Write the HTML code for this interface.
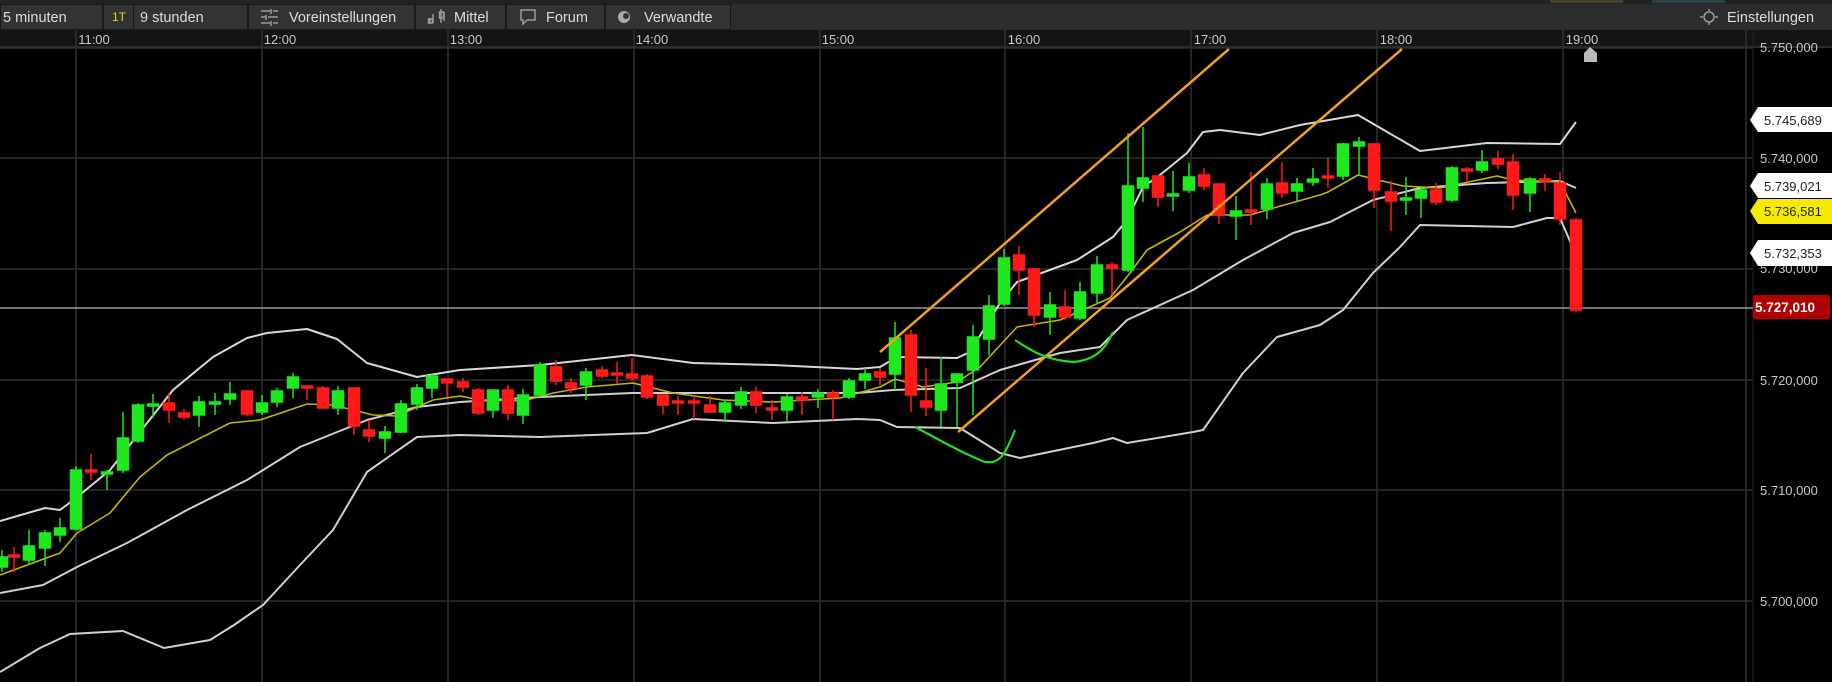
<!DOCTYPE html>
<html><head><meta charset="utf-8"><style>
html,body{margin:0;padding:0;background:#000;width:1832px;height:682px;overflow:hidden;font-family:"Liberation Sans",sans-serif}
svg{display:block}
</style></head><body>
<svg width="1832" height="682" viewBox="0 0 1832 682" xmlns="http://www.w3.org/2000/svg" font-family="Liberation Sans, sans-serif">
<rect width="1832" height="682" fill="#000"/>
<!-- top strip -->
<rect x="0" y="0" width="1832" height="4" fill="#222"/>
<rect x="1550" y="0" width="73" height="3" fill="#4a3f2a"/>
<rect x="1652" y="0" width="73" height="3" fill="#2a4148"/>
<!-- toolbar -->
<rect x="0" y="4" width="1832" height="26" fill="#2a2c2e"/>
<g fill="#313335" stroke="#1a1a1a" stroke-width="1">
<rect x="0.5" y="4.5" width="102" height="25"/>
<rect x="103.5" y="4.5" width="144" height="25"/>
<rect x="248.5" y="4.5" width="166" height="25"/>
<rect x="415.5" y="4.5" width="90" height="25"/>
<rect x="506.5" y="4.5" width="98" height="25"/>
<rect x="605.5" y="4.5" width="125" height="25"/>
</g>
<line x1="133.5" y1="5" x2="133.5" y2="29" stroke="#1a1a1a"/>
<g font-size="14.5" fill="#dcdcdc">
<text x="3" y="22">5 minuten</text>
<text x="112" y="21" fill="#e8d800" font-size="12">1T</text>
<text x="140" y="22">9 stunden</text>
<text x="289" y="22">Voreinstellungen</text>
<text x="454" y="22">Mittel</text>
<text x="546" y="22">Forum</text>
<text x="644" y="22">Verwandte</text>
<text x="1727" y="22">Einstellungen</text>
</g>
<!-- icons -->
<g stroke="#9a9a9a" stroke-width="1.5" fill="none">
<path d="M261 11h9M273 11h5M261 17h4M268 17h10M261 23h9M273 23h5M271 9v5M266 15v5M271 21v5"/>
<path d="M430 18v6M433 14v9M441 9v14M444 12v9"/>
<rect x="428.5" y="19" width="4" height="4"/><rect x="439.5" y="12" width="4" height="6"/>
<path d="M521 10h14v10h-8l-4 4v-4h-2z"/>
<path d="M1700 17h3M1715 17h3M1709 9v2M1709 23v2"/>
<circle cx="1709" cy="17" r="5"/>
</g>
<circle cx="624" cy="17" r="6" fill="#aaa"/><circle cx="626" cy="16" r="3" fill="#313335"/>
<!-- time axis row -->
<rect x="0" y="30" width="1832" height="17" fill="#141414"/>
<line x1="0" y1="47" x2="1832" y2="47" stroke="#2a2a2a" stroke-width="2"/>
<g font-size="13" fill="#c8c8c8" text-anchor="middle">
<text x="94" y="44">11:00</text><text x="280" y="44">12:00</text><text x="466" y="44">13:00</text>
<text x="652" y="44">14:00</text><text x="838" y="44">15:00</text><text x="1024" y="44">16:00</text>
<text x="1210" y="44">17:00</text><text x="1396" y="44">18:00</text><text x="1582" y="44">19:00</text>
</g>
<!-- grid -->
<g stroke="#303030" stroke-width="1.5">
<path d="M76 30V682M262 30V682M448 30V682M634 30V682M820 30V682M1005 30V682M1191 30V682M1377 30V682M1563 30V682M1746 30V682"/>
<path d="M0 48H1753M0 158H1753M0 269H1753M0 380H1753M0 490H1753M0 601H1753"/>
</g>
<line x1="1753" y1="30" x2="1753" y2="682" stroke="#222" stroke-width="1"/>
<line x1="0" y1="308" x2="1753" y2="308" stroke="#9a9a9a" stroke-width="1.5"/>
<!-- marker -->
<path d="M1584 62v-9l6-6 7 6v9z" fill="#bbb"/>
<!-- bands -->
<g fill="none" stroke-width="2" stroke-linejoin="round">
<polyline stroke="#d8d8d8" points="0,521 45,508 60,510 76,498 110,470 140,432 173,390 213,357 247,338 267,333 307,329 337,339 367,363 417,377 460,370 540,365 632,355 693,363 773,365 857,369 880,367 897,357 957,358 970,352 1000,303 1017,282 1077,260 1113,237 1127,220 1143,187 1160,175 1187,153 1203,132 1220,130 1260,135 1300,125 1358,115 1420,151 1487,143 1560,144 1576,122"/>
<polyline stroke="#d0d0d0" points="0,593 43,585 77,567 127,543 187,510 247,480 300,447 367,420 417,407 460,402 540,397 632,393 740,393 857,393 893,390 960,388 1000,370 1060,353 1100,347 1127,320 1193,290 1243,260 1293,233 1330,222 1373,200 1420,188 1487,183 1560,181 1576,188"/>
<polyline stroke="#d0d0d0" points="0,672 40,648 70,634 123,631 164,648 210,640 234,625 263,605 300,565 333,530 367,472 417,437 460,435 540,437 647,433 693,419 773,423 857,419 880,420 897,427 960,428 1000,453 1020,458 1093,443 1113,438 1127,443 1193,432 1203,430 1243,373 1277,337 1320,325 1343,310 1373,273 1400,247 1420,225 1513,227 1547,218 1560,218 1576,255"/>
<polyline stroke="#c8b400" stroke-width="1.6" points="0,575 60,553 77,533 110,513 140,477 167,455 230,423 260,420 307,404 333,405 373,415 397,416 433,400 460,396 480,400 523,401 553,393 587,387 633,383 673,393 723,400 773,402 840,398 880,387 895,379 923,387 957,382 980,367 1017,327 1060,320 1110,298 1130,273 1147,250 1180,232 1207,215 1250,215 1277,207 1320,195 1328,192 1358,175 1403,186 1440,188 1497,176 1513,180 1560,182 1576,213"/>
</g>
<!-- candles -->
<g stroke-width="1.5">
<g stroke="#ff1a1a" fill="#ff1a1a">
<path d="M14 547V572M91 454V480M169 393V423M184 409V420M247 391V416M307 386V400M323 386V409M354 387V435M369 420V442M447 379V397M463 378V392M478 388V415M508 385V420M556 360V385M571 378V393M602 366V378M617 362V384M632 358V381M647 374V399M663 395V414M678 396V415M694 396V419M710 396V413M756 387V413M772 400V420M802 392V415M833 390V420M880 368V385M911 330V412M926 368V416M1019 246V295M1034 269V327M1065 290V320M1112 262V295M1158 176V207M1204 168V190M1219 184V224M1251 172V225M1282 162V198M1328 158V188M1374 143V208M1391 181V231M1436 183V205M1467 167V181M1498 151V169M1513 154V210M1545 174V191M1560 172V225M1576 218V312"/>
<rect x="8.5" y="555" width="11" height="2"/><rect x="85.5" y="470" width="11" height="2"/><rect x="163.5" y="403" width="11" height="7"/><rect x="178.5" y="413" width="11" height="4"/><rect x="241.5" y="391" width="11" height="23"/><rect x="301.5" y="386" width="11" height="2"/><rect x="317.5" y="388" width="11" height="20"/><rect x="348.5" y="388" width="11" height="38"/><rect x="363.5" y="430" width="11" height="6"/><rect x="441.5" y="379" width="11" height="4"/><rect x="457.5" y="382" width="11" height="5"/><rect x="472.5" y="390" width="11" height="23"/><rect x="502.5" y="390" width="11" height="23"/><rect x="550.5" y="367" width="11" height="14"/><rect x="565.5" y="383" width="11" height="5"/><rect x="596.5" y="370" width="11" height="6"/><rect x="611.5" y="373" width="11" height="2"/><rect x="626.5" y="374" width="11" height="4"/><rect x="641.5" y="376" width="11" height="21"/><rect x="657.5" y="395" width="11" height="10"/><rect x="672.5" y="401" width="11" height="2"/><rect x="688.5" y="401" width="11" height="2"/><rect x="704.5" y="405" width="11" height="7"/><rect x="750.5" y="392" width="11" height="13"/><rect x="766.5" y="408" width="11" height="2"/><rect x="796.5" y="397" width="11" height="3"/><rect x="827.5" y="393" width="11" height="4"/><rect x="874.5" y="372" width="11" height="5"/><rect x="905.5" y="335" width="11" height="60"/><rect x="920.5" y="401" width="11" height="6"/><rect x="1013.5" y="255" width="11" height="15"/><rect x="1028.5" y="269" width="11" height="46"/><rect x="1059.5" y="307" width="11" height="10"/><rect x="1106.5" y="265" width="11" height="3"/><rect x="1152.5" y="176" width="11" height="21"/><rect x="1198.5" y="175" width="11" height="11"/><rect x="1213.5" y="184" width="11" height="31"/><rect x="1245.5" y="210" width="11" height="2"/><rect x="1276.5" y="183" width="11" height="10"/><rect x="1322.5" y="176" width="11" height="2"/><rect x="1368.5" y="144" width="11" height="46"/><rect x="1385.5" y="192" width="11" height="9"/><rect x="1430.5" y="190" width="11" height="12"/><rect x="1461.5" y="169" width="11" height="2"/><rect x="1492.5" y="159" width="11" height="5"/><rect x="1507.5" y="162" width="11" height="33"/><rect x="1539.5" y="179" width="11" height="2"/><rect x="1554.5" y="183" width="11" height="36"/><rect x="1570.5" y="220" width="11" height="90"/>
</g>
<g stroke="#1ee81e" fill="#1ee81e">
<path d="M2 550V572M29 530V565M45 530V566M60 518V542M76 466V530M107 470V490M123 412V473M138 403V443M153 394V418M199 396V427M215 393V415M230 382V405M262 395V415M277 388V407M293 373V398M338 386V415M385 426V453M401 400V433M417 384V410M432 374V398M493 390V418M523 389V424M540 362V397M586 368V400M725 400V422M741 387V409M787 394V422M818 389V408M849 378V399M865 368V389M895 322V390M941 357V427M957 374V427M973 325V415M989 295V355M1004 249V306M1050 292V335M1080 282V320M1097 256V304M1128 133V272M1143 127V202M1173 171V211M1189 163V193M1236 196V240M1267 178V219M1297 178V201M1313 168V186M1343 143V180M1359 137V175M1406 177V215M1421 186V218M1452 166V202M1482 150V173M1530 177V212"/>
<rect x="-3.5" y="557" width="11" height="10"/><rect x="23.5" y="546" width="11" height="14"/><rect x="39.5" y="533" width="11" height="15"/><rect x="54.5" y="528" width="11" height="7"/><rect x="70.5" y="470" width="11" height="59"/><rect x="101.5" y="472" width="11" height="2"/><rect x="117.5" y="438" width="11" height="32"/><rect x="132.5" y="405" width="11" height="36"/><rect x="147.5" y="404" width="11" height="2"/><rect x="193.5" y="402" width="11" height="13"/><rect x="209.5" y="402" width="11" height="2"/><rect x="224.5" y="394" width="11" height="5"/><rect x="256.5" y="403" width="11" height="9"/><rect x="271.5" y="391" width="11" height="11"/><rect x="287.5" y="377" width="11" height="11"/><rect x="332.5" y="391" width="11" height="17"/><rect x="379.5" y="432" width="11" height="6"/><rect x="395.5" y="404" width="11" height="28"/><rect x="411.5" y="388" width="11" height="16"/><rect x="426.5" y="376" width="11" height="12"/><rect x="487.5" y="390" width="11" height="20"/><rect x="517.5" y="395" width="11" height="20"/><rect x="534.5" y="365" width="11" height="30"/><rect x="580.5" y="372" width="11" height="13"/><rect x="719.5" y="403" width="11" height="9"/><rect x="735.5" y="392" width="11" height="13"/><rect x="781.5" y="397" width="11" height="13"/><rect x="812.5" y="393" width="11" height="4"/><rect x="843.5" y="381" width="11" height="16"/><rect x="859.5" y="374" width="11" height="6"/><rect x="889.5" y="338" width="11" height="36"/><rect x="935.5" y="384" width="11" height="26"/><rect x="951.5" y="374" width="11" height="8"/><rect x="967.5" y="337" width="11" height="33"/><rect x="983.5" y="306" width="11" height="33"/><rect x="998.5" y="258" width="11" height="46"/><rect x="1044.5" y="305" width="11" height="12"/><rect x="1074.5" y="292" width="11" height="26"/><rect x="1091.5" y="265" width="11" height="28"/><rect x="1122.5" y="186" width="11" height="84"/><rect x="1137.5" y="178" width="11" height="10"/><rect x="1167.5" y="194" width="11" height="2"/><rect x="1183.5" y="177" width="11" height="13"/><rect x="1230.5" y="211" width="11" height="5"/><rect x="1261.5" y="184" width="11" height="25"/><rect x="1291.5" y="184" width="11" height="7"/><rect x="1307.5" y="179" width="11" height="3"/><rect x="1337.5" y="144" width="11" height="32"/><rect x="1353.5" y="142" width="11" height="4"/><rect x="1400.5" y="198" width="11" height="2"/><rect x="1415.5" y="190" width="11" height="8"/><rect x="1446.5" y="168" width="11" height="32"/><rect x="1476.5" y="162" width="11" height="8"/><rect x="1524.5" y="179" width="11" height="14"/>
</g>
</g>
<!-- trend lines -->
<g fill="none" stroke="#f0a020" stroke-width="2.5">
<line x1="880" y1="352" x2="1229" y2="49"/>
<line x1="958" y1="432" x2="1402" y2="49"/>
</g>
<g fill="none" stroke="#22dd22" stroke-width="2.2">
<path d="M915 427C940 440 960 452 985 462C1000 464 1005 455 1015 430"/>
<path d="M1015 340C1030 350 1045 360 1073 362C1095 360 1105 350 1113 332"/>
</g>
<!-- price axis -->
<g font-size="13" fill="#c8c8c8">
<text x="1760" y="52">5.750,000</text>
<text x="1760" y="163">5.740,000</text>
<text x="1760" y="273">5.730,000</text>
<text x="1760" y="385">5.720,000</text>
<text x="1760" y="495">5.710,000</text>
<text x="1760" y="606">5.700,000</text>
</g>
<g font-size="13" fill="#222">
<path d="M1750 120L1758 107H1832V132H1758Z" fill="#fff"/><text x="1764" y="125">5.745,689</text>
<path d="M1750 186L1758 173H1832V198H1758Z" fill="#fff"/><text x="1764" y="191">5.739,021</text>
<path d="M1750 211L1758 199H1832V224H1758Z" fill="#f5ea00"/><text x="1764" y="216">5.736,581</text>
<path d="M1750 253L1758 240H1832V266H1758Z" fill="#fff"/><text x="1764" y="258">5.732,353</text>
</g>
<rect x="1753" y="295" width="77" height="24" rx="2" fill="#b00000"/>
<text x="1755" y="312" font-size="13.5" font-weight="bold" fill="#fff">5.727,010</text>
</svg>
</body></html>
